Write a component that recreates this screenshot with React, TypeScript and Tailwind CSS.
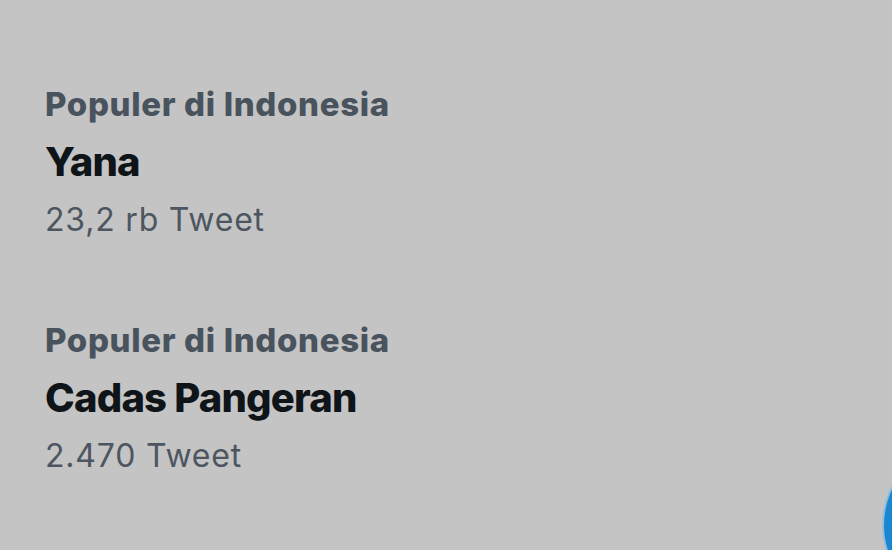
const trends = [
  { label: 'Populer di Indonesia', name: 'Yana', count: '23,2 rb Tweet' },
  { label: 'Populer di Indonesia', name: 'Cadas Pangeran', count: '2.470 Tweet' },
];

export default function App() {
  return (
    <div
      className="relative h-[550px] w-[892px] overflow-hidden bg-[#c4c4c4]"
      style={{ fontFamily: 'Inter, "Noto Sans", sans-serif' }}
    >
      <div className="flex flex-col gap-[80px] pl-[45px] pt-[84px]">
        {trends.map((t) => (
          <div key={t.name} className="flex flex-col">
            <div className="text-[33px] font-extrabold leading-[40px] tracking-[0.65px] text-[#48535d]">{t.label}</div>
            <div className="mt-[14px] text-[40px] font-extrabold leading-[48px] tracking-[-0.8px] text-[#0f1419]">{t.name}</div>
            <div className="mt-[14px] text-[32px] font-normal leading-[40px] tracking-[0.8px] text-[#4d5660]">{t.count}</div>
          </div>
        ))}
      </div>
      <div className="absolute left-[882px] top-[440px] h-[170px] w-[170px] rounded-full border-2 border-[#8fbde0] bg-[#1a86cf]" />
    </div>
  );
}
